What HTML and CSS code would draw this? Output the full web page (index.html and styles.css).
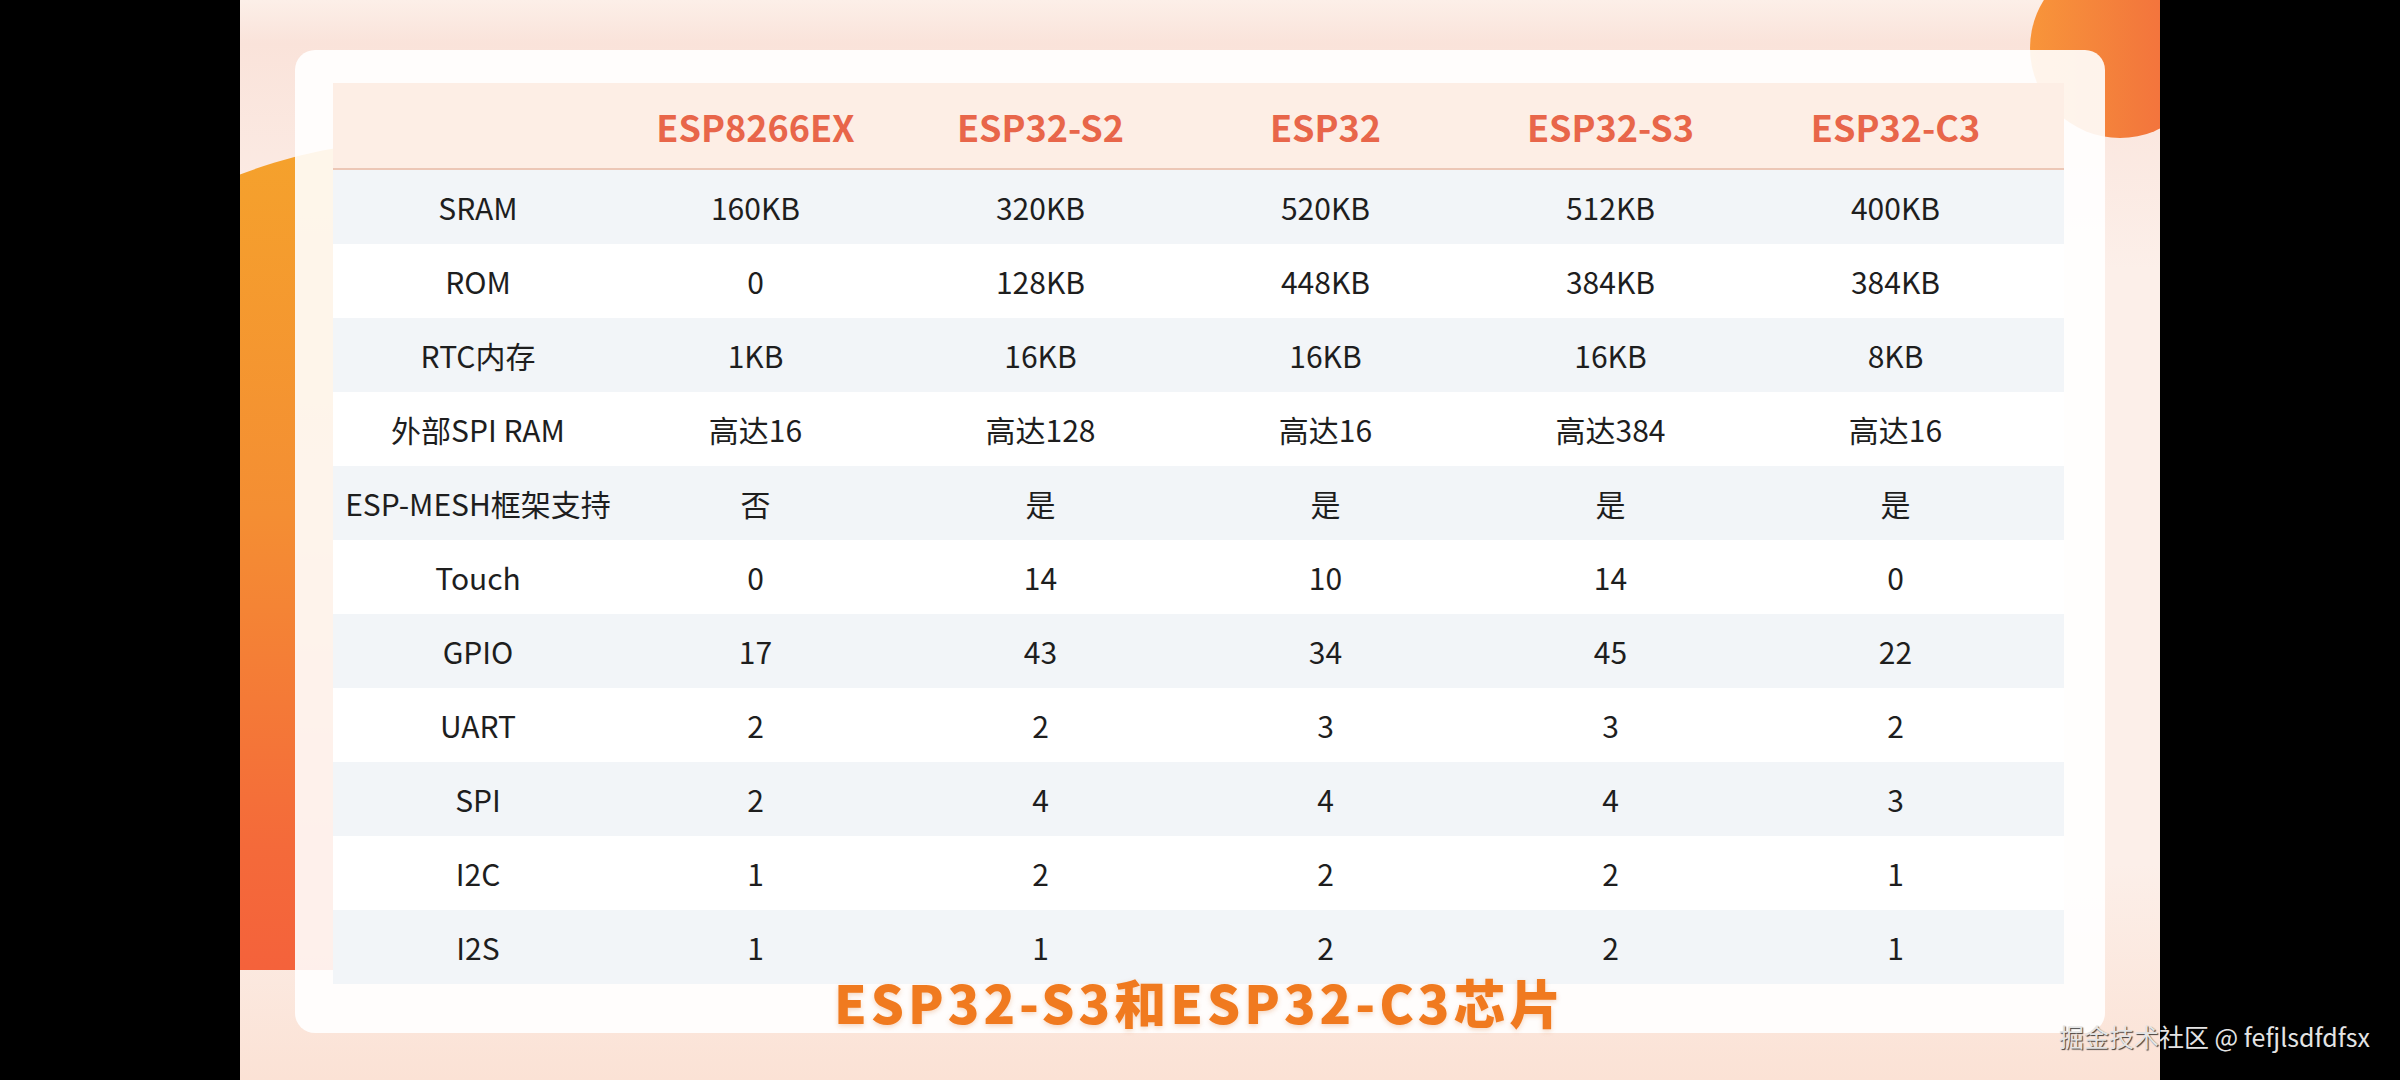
FILE: index.html
```html
<!DOCTYPE html>
<html lang="zh-CN">
<head>
<meta charset="utf-8">
<title>ESP32-S3和ESP32-C3芯片</title>
<link rel="stylesheet" href="styles.css">
</head>
<body>
  <div class="frame">
    <div class="blob"></div>
    <div class="circle"></div>
    <div class="card">
      <div class="table">
        <div class="row head">
          <div class="cell label"></div>
          <div class="cell">ESP8266EX</div>
          <div class="cell">ESP32-S2</div>
          <div class="cell">ESP32</div>
          <div class="cell">ESP32-S3</div>
          <div class="cell">ESP32-C3</div>
        </div>
        <div class="row shade">
          <div class="cell label">SRAM</div>
          <div class="cell">160KB</div><div class="cell">320KB</div><div class="cell">520KB</div><div class="cell">512KB</div><div class="cell">400KB</div>
        </div>
        <div class="row">
          <div class="cell label">ROM</div>
          <div class="cell">0</div><div class="cell">128KB</div><div class="cell">448KB</div><div class="cell">384KB</div><div class="cell">384KB</div>
        </div>
        <div class="row shade">
          <div class="cell label">RTC内存</div>
          <div class="cell">1KB</div><div class="cell">16KB</div><div class="cell">16KB</div><div class="cell">16KB</div><div class="cell">8KB</div>
        </div>
        <div class="row">
          <div class="cell label">外部SPI RAM</div>
          <div class="cell">高达16</div><div class="cell">高达128</div><div class="cell">高达16</div><div class="cell">高达384</div><div class="cell">高达16</div>
        </div>
        <div class="row shade">
          <div class="cell label">ESP-MESH框架支持</div>
          <div class="cell">否</div><div class="cell">是</div><div class="cell">是</div><div class="cell">是</div><div class="cell">是</div>
        </div>
        <div class="row">
          <div class="cell label">Touch</div>
          <div class="cell">0</div><div class="cell">14</div><div class="cell">10</div><div class="cell">14</div><div class="cell">0</div>
        </div>
        <div class="row shade">
          <div class="cell label">GPIO</div>
          <div class="cell">17</div><div class="cell">43</div><div class="cell">34</div><div class="cell">45</div><div class="cell">22</div>
        </div>
        <div class="row">
          <div class="cell label">UART</div>
          <div class="cell">2</div><div class="cell">2</div><div class="cell">3</div><div class="cell">3</div><div class="cell">2</div>
        </div>
        <div class="row shade">
          <div class="cell label">SPI</div>
          <div class="cell">2</div><div class="cell">4</div><div class="cell">4</div><div class="cell">4</div><div class="cell">3</div>
        </div>
        <div class="row">
          <div class="cell label">I2C</div>
          <div class="cell">1</div><div class="cell">2</div><div class="cell">2</div><div class="cell">2</div><div class="cell">1</div>
        </div>
        <div class="row shade">
          <div class="cell label">I2S</div>
          <div class="cell">1</div><div class="cell">1</div><div class="cell">2</div><div class="cell">2</div><div class="cell">1</div>
        </div>
      </div>
    </div>
    <div class="subtitle">ESP32-S3和ESP32-C3芯片</div>
  </div>
  <div class="watermark">掘金技术社区 @ fefjlsdfdfsx</div>
</body>
</html>
```
FILE: styles.css
```css
html, body {
  margin: 0;
  padding: 0;
}
body {
  width: 2400px;
  height: 1080px;
  background: #000;
  overflow: hidden;
  position: relative;
  display: flex;
  font-family: "Noto Sans CJK SC", "Noto Sans", sans-serif;
}
.frame {
  position: relative;
  margin-left: 240px;
  width: 1920px;
  height: 1080px;
  overflow: hidden;
  background: linear-gradient(180deg, #fcefe8 0%, #fae3da 4%, #fcefe9 25%, #fcefe9 80%, #fbe2d5 100%);
}
.blob {
  position: absolute;
  left: -320px;
  top: 141px;
  width: 1000px;
  height: 829px;
  border-radius: 500px 500px 0 0;
  background: linear-gradient(180deg, #f5a22c 0%, #f48e33 45%, #f46a3a 85%, #f4623b 100%);
}
.circle {
  position: absolute;
  left: 1790px;
  top: -42px;
  width: 180px;
  height: 180px;
  border-radius: 50%;
  background: linear-gradient(90deg, #f8953a 0%, #f37a3c 60%, #f3683f 100%);
}
.card {
  position: relative;
  margin: 50px 0 0 55px;
  width: 1810px;
  height: 983px;
  box-sizing: border-box;
  padding: 33px 41px 0 38px;
  border-radius: 20px;
  background: rgba(255, 255, 255, 0.9);
}
.table {
  width: 1731px;
}
.row {
  display: grid;
  grid-template-columns: 280px repeat(5, 285px) 1fr;
  height: 74px;
  align-items: center;
  background: #fff;
  color: #1e1e1e;
  font-size: 30px;
}
.row.shade {
  background: #f2f5f8;
}
.row.head {
  height: 85px;
  background: #fdeee5;
  border-bottom: 2px solid #ecc7b6;
  color: #e8664a;
  font-size: 36px;
  font-weight: 700;
}
.cell {
  text-align: center;
  white-space: nowrap;
  line-height: 1;
}
.cell.label {
  padding-left: 10px;
}
.subtitle {
  position: absolute;
  left: 594px;
  top: 976px;
  font-size: 52px;
  line-height: 52px;
  font-weight: 900;
  letter-spacing: 4px;
  color: #f07a1f;
  text-shadow: 0 2px 5px rgba(210, 100, 20, 0.25);
}
.watermark {
  position: absolute;
  right: 30px;
  top: 1020px;
  font-size: 25px;
  line-height: 32px;
  color: #e4e4e4;
  text-shadow: 1px 1px 1px rgba(0, 0, 0, 0.75);
}
```
